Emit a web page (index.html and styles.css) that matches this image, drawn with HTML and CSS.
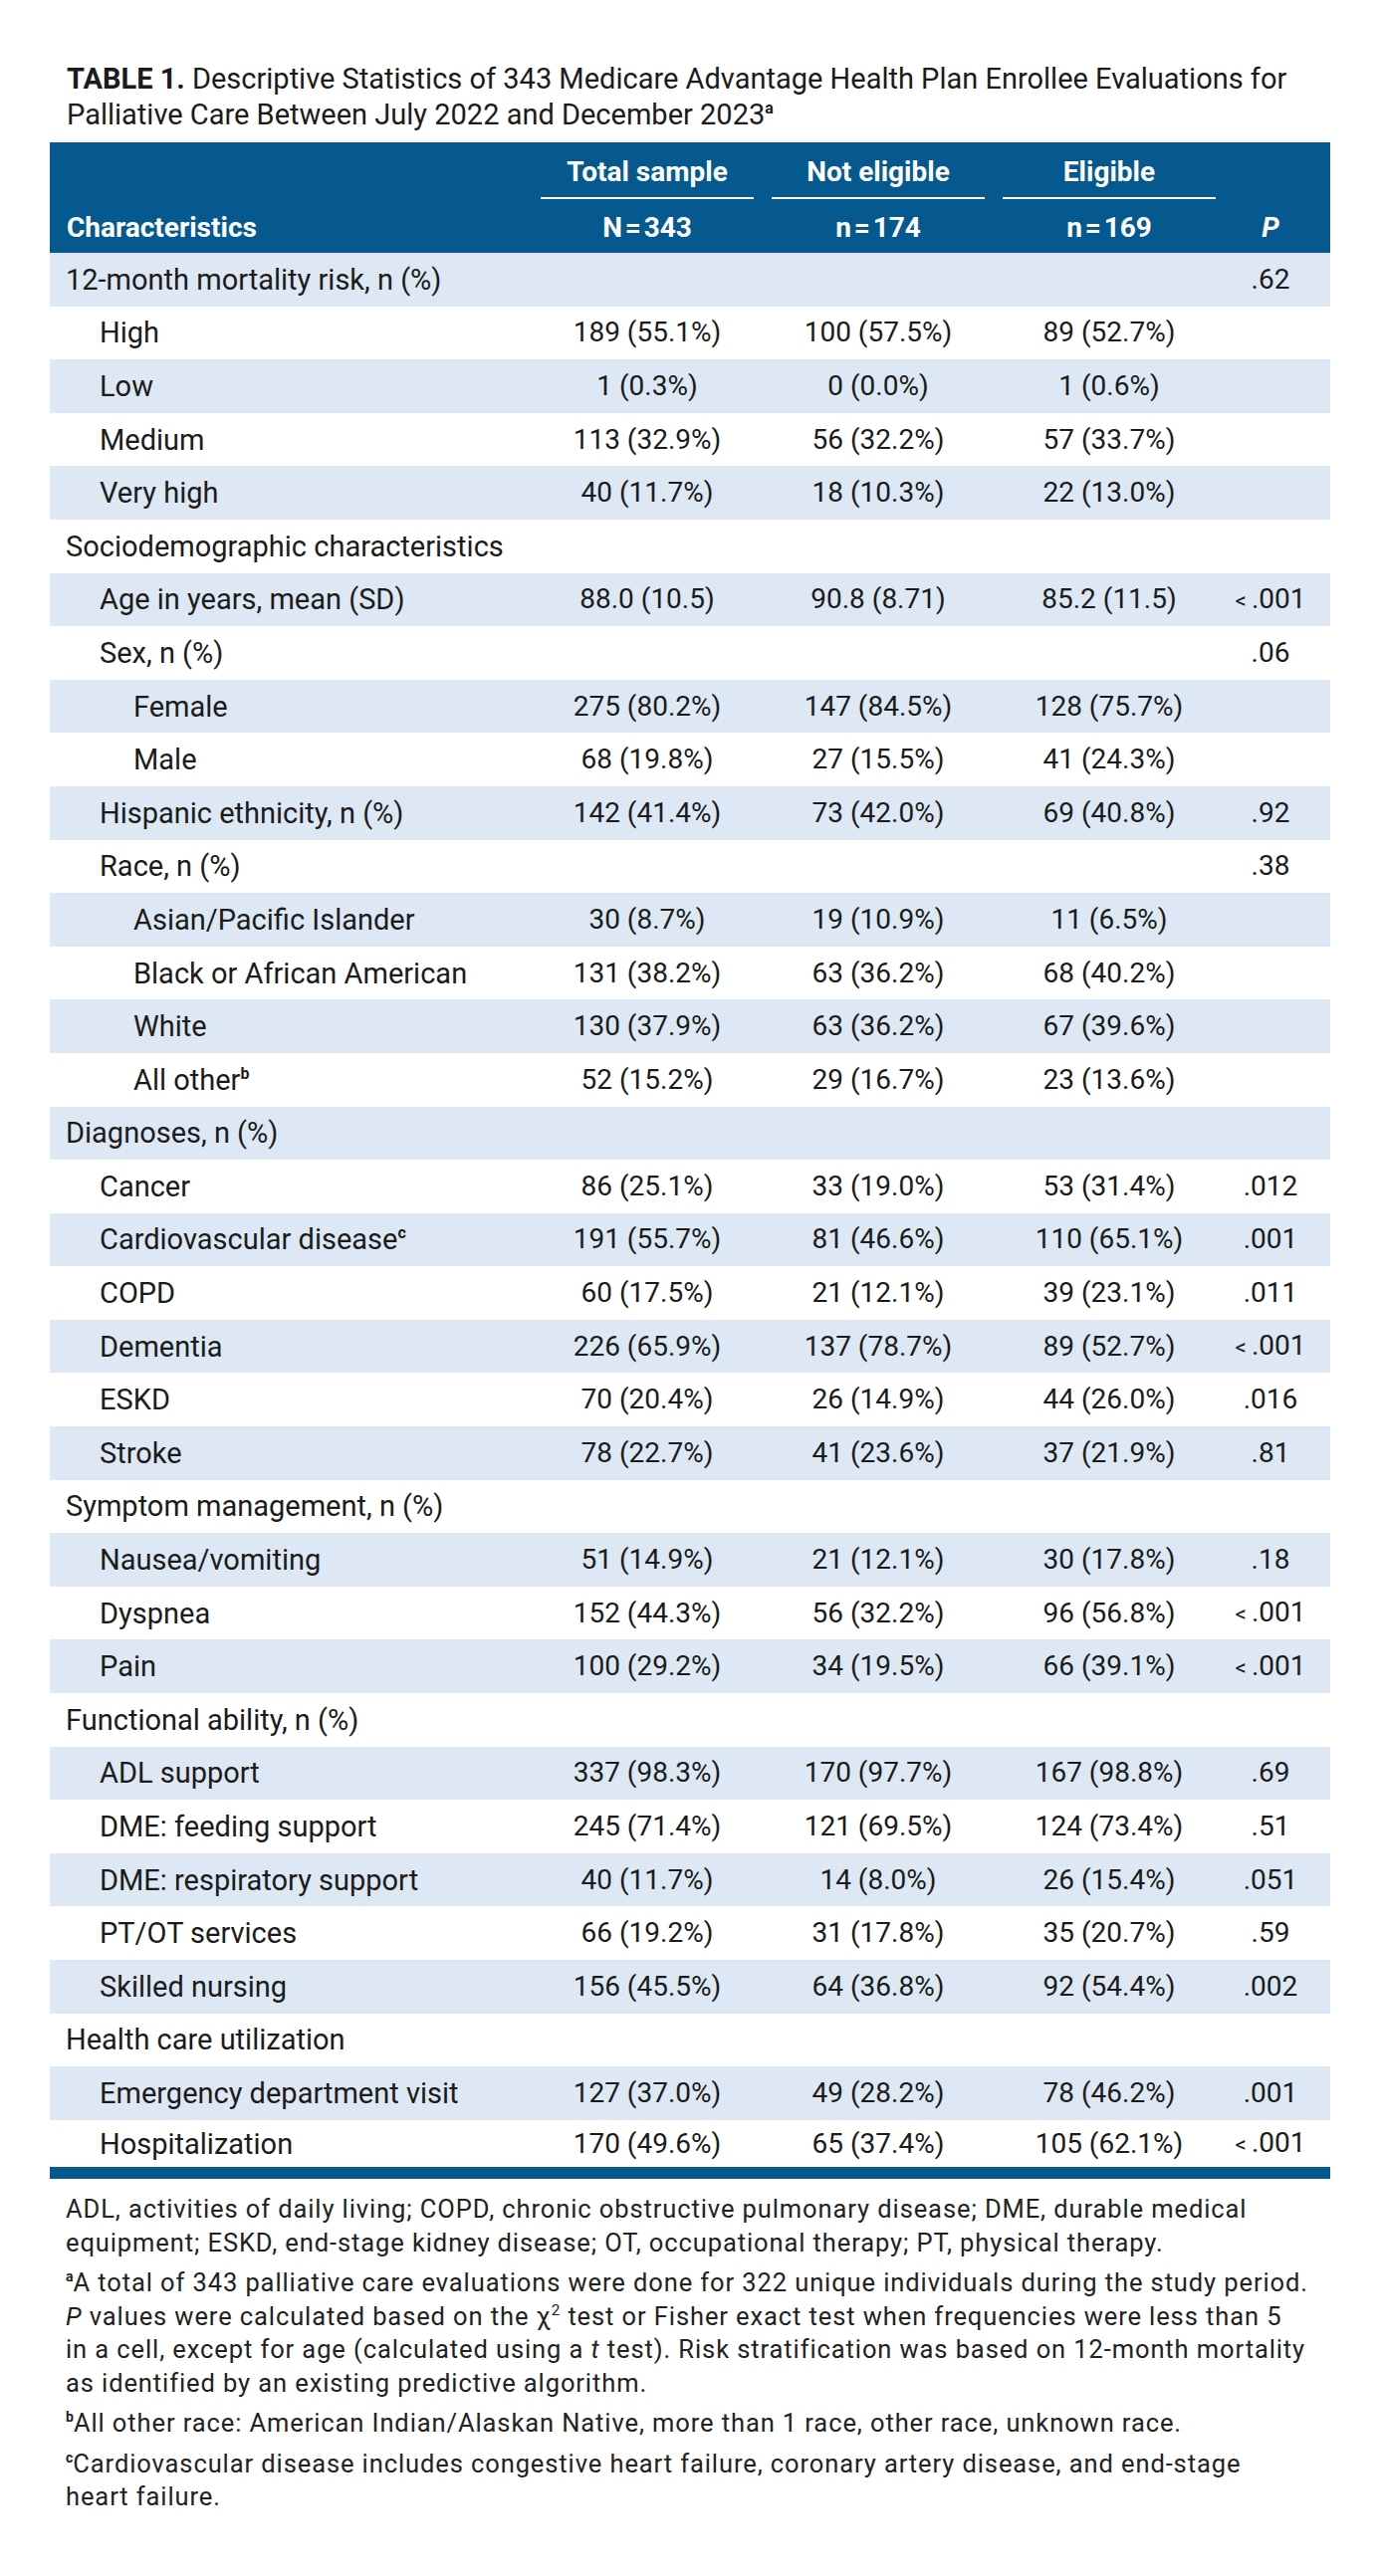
FILE: index.html
```html
<!DOCTYPE html>
<html lang="en">
<head>
<meta charset="utf-8">
<title>Table 1</title>
<link rel="stylesheet" href="styles.css">
</head>
<body>
<div class="figure">
  <p class="caption"><span class="label">TABLE 1.</span> Descriptive Statistics of 343 Medicare Advantage Health Plan Enrollee Evaluations for<br>Palliative Care Between July 2022 and December 2023<sup class="fn">a</sup></p>
  <table class="stats">
    <colgroup>
      <col class="c-char"><col class="c-num"><col class="c-num"><col class="c-num"><col class="c-p">
    </colgroup>
    <thead>
      <tr class="h1">
        <th class="th-char" rowspan="2">Characteristics</th>
        <th class="grp"><div class="grp-label">Total sample</div></th>
        <th class="grp"><div class="grp-label">Not eligible</div></th>
        <th class="grp"><div class="grp-label">Eligible</div></th>
        <th class="th-p" rowspan="2"><i>P</i></th>
      </tr>
      <tr class="h2">
        <th class="nn">N&#8202;=&#8202;343</th>
        <th class="nn">n&#8202;=&#8202;174</th>
        <th class="nn">n&#8202;=&#8202;169</th>
      </tr>
    </thead>
    <tbody>
      <tr><td class="l0">12-month mortality risk, n (%)</td><td></td><td></td><td></td><td class="p">.62</td></tr>
      <tr><td class="l1">High</td><td>189 (55.1%)</td><td>100 (57.5%)</td><td>89 (52.7%)</td><td class="p"></td></tr>
      <tr><td class="l1">Low</td><td>1 (0.3%)</td><td>0 (0.0%)</td><td>1 (0.6%)</td><td class="p"></td></tr>
      <tr><td class="l1">Medium</td><td>113 (32.9%)</td><td>56 (32.2%)</td><td>57 (33.7%)</td><td class="p"></td></tr>
      <tr><td class="l1">Very high</td><td>40 (11.7%)</td><td>18 (10.3%)</td><td>22 (13.0%)</td><td class="p"></td></tr>
      <tr><td class="l0">Sociodemographic characteristics</td><td></td><td></td><td></td><td class="p"></td></tr>
      <tr><td class="l1">Age in years, mean (SD)</td><td>88.0 (10.5)</td><td>90.8 (8.71)</td><td>85.2 (11.5)</td><td class="p"><span class="lt">&lt;</span>.001</td></tr>
      <tr><td class="l1">Sex, n (%)</td><td></td><td></td><td></td><td class="p">.06</td></tr>
      <tr><td class="l2">Female</td><td>275 (80.2%)</td><td>147 (84.5%)</td><td>128 (75.7%)</td><td class="p"></td></tr>
      <tr><td class="l2">Male</td><td>68 (19.8%)</td><td>27 (15.5%)</td><td>41 (24.3%)</td><td class="p"></td></tr>
      <tr><td class="l1">Hispanic ethnicity, n (%)</td><td>142 (41.4%)</td><td>73 (42.0%)</td><td>69 (40.8%)</td><td class="p">.92</td></tr>
      <tr><td class="l1">Race, n (%)</td><td></td><td></td><td></td><td class="p">.38</td></tr>
      <tr><td class="l2">Asian/Pacific Islander</td><td>30 (8.7%)</td><td>19 (10.9%)</td><td>11 (6.5%)</td><td class="p"></td></tr>
      <tr><td class="l2">Black or African American</td><td>131 (38.2%)</td><td>63 (36.2%)</td><td>68 (40.2%)</td><td class="p"></td></tr>
      <tr><td class="l2">White</td><td>130 (37.9%)</td><td>63 (36.2%)</td><td>67 (39.6%)</td><td class="p"></td></tr>
      <tr><td class="l2">All other<sup class="fn">b</sup></td><td>52 (15.2%)</td><td>29 (16.7%)</td><td>23 (13.6%)</td><td class="p"></td></tr>
      <tr><td class="l0">Diagnoses, n (%)</td><td></td><td></td><td></td><td class="p"></td></tr>
      <tr><td class="l1">Cancer</td><td>86 (25.1%)</td><td>33 (19.0%)</td><td>53 (31.4%)</td><td class="p">.012</td></tr>
      <tr><td class="l1">Cardiovascular disease<sup class="fn">c</sup></td><td>191 (55.7%)</td><td>81 (46.6%)</td><td>110 (65.1%)</td><td class="p">.001</td></tr>
      <tr><td class="l1">COPD</td><td>60 (17.5%)</td><td>21 (12.1%)</td><td>39 (23.1%)</td><td class="p">.011</td></tr>
      <tr><td class="l1">Dementia</td><td>226 (65.9%)</td><td>137 (78.7%)</td><td>89 (52.7%)</td><td class="p"><span class="lt">&lt;</span>.001</td></tr>
      <tr><td class="l1">ESKD</td><td>70 (20.4%)</td><td>26 (14.9%)</td><td>44 (26.0%)</td><td class="p">.016</td></tr>
      <tr><td class="l1">Stroke</td><td>78 (22.7%)</td><td>41 (23.6%)</td><td>37 (21.9%)</td><td class="p">.81</td></tr>
      <tr><td class="l0">Symptom management, n (%)</td><td></td><td></td><td></td><td class="p"></td></tr>
      <tr><td class="l1">Nausea/vomiting</td><td>51 (14.9%)</td><td>21 (12.1%)</td><td>30 (17.8%)</td><td class="p">.18</td></tr>
      <tr><td class="l1">Dyspnea</td><td>152 (44.3%)</td><td>56 (32.2%)</td><td>96 (56.8%)</td><td class="p"><span class="lt">&lt;</span>.001</td></tr>
      <tr><td class="l1">Pain</td><td>100 (29.2%)</td><td>34 (19.5%)</td><td>66 (39.1%)</td><td class="p"><span class="lt">&lt;</span>.001</td></tr>
      <tr><td class="l0">Functional ability, n (%)</td><td></td><td></td><td></td><td class="p"></td></tr>
      <tr><td class="l1">ADL support</td><td>337 (98.3%)</td><td>170 (97.7%)</td><td>167 (98.8%)</td><td class="p">.69</td></tr>
      <tr><td class="l1">DME: feeding support</td><td>245 (71.4%)</td><td>121 (69.5%)</td><td>124 (73.4%)</td><td class="p">.51</td></tr>
      <tr><td class="l1">DME: respiratory support</td><td>40 (11.7%)</td><td>14 (8.0%)</td><td>26 (15.4%)</td><td class="p">.051</td></tr>
      <tr><td class="l1">PT/OT services</td><td>66 (19.2%)</td><td>31 (17.8%)</td><td>35 (20.7%)</td><td class="p">.59</td></tr>
      <tr><td class="l1">Skilled nursing</td><td>156 (45.5%)</td><td>64 (36.8%)</td><td>92 (54.4%)</td><td class="p">.002</td></tr>
      <tr><td class="l0">Health care utilization</td><td></td><td></td><td></td><td class="p"></td></tr>
      <tr><td class="l1">Emergency department visit</td><td>127 (37.0%)</td><td>49 (28.2%)</td><td>78 (46.2%)</td><td class="p">.001</td></tr>
      <tr><td class="l1">Hospitalization</td><td>170 (49.6%)</td><td>65 (37.4%)</td><td>105 (62.1%)</td><td class="p"><span class="lt">&lt;</span>.001</td></tr>
    </tbody>
  </table>
  <div class="notes">
    <p>ADL, activities of daily living; COPD, chronic obstructive pulmonary disease; DME, durable medical equipment; ESKD, end-stage kidney disease; OT, occupational therapy; PT, physical therapy.</p>
    <p><sup class="fn">a</sup>A total of 343 palliative care evaluations were done for 322 unique individuals during the study period. <i>P</i> values were calculated based on the &chi;<sup class="sq">2</sup> test or Fisher exact test when frequencies were less than 5 in a cell, except for age (calculated using a <i>t</i> test). Risk stratification was based on 12-month mortality as identified by an existing predictive algorithm.</p>
    <p><sup class="fn">b</sup>All other race: American Indian/Alaskan Native, more than 1 race, other race, unknown race.</p>
    <p><sup class="fn">c</sup>Cardiovascular disease includes congestive heart failure, coronary artery disease, and end-stage heart failure.</p>
  </div>
</div>
</body>
</html>
```
FILE: styles.css
```css
html, body {
  margin: 0;
  padding: 0;
  background: #ffffff;
}

body {
  font-family: Roboto, "Liberation Sans", sans-serif;
  color: #1b1b1b;
}

.figure {
  padding: 61px 50px 40px 50px;
}

.caption {
  margin: 0 0 10px 17px;
  font-size: 29px;
  line-height: 36px;
  font-weight: 400;
}

.caption .label {
  font-weight: 700;
}

sup.fn {
  font-size: 0.55em;
  font-weight: 700;
  line-height: 0;
  vertical-align: 0.7em;
  letter-spacing: 0;
}

sup.sq {
  font-size: 0.6em;
  line-height: 0;
  vertical-align: 0.65em;
}

.stats {
  width: 1286px;
  border-collapse: collapse;
  table-layout: fixed;
  border-bottom: 12px solid #06598e;
}

.c-char { width: 484px; }
.c-num { width: 232px; }
.c-p { width: 106px; }

.stats thead th {
  background: #06598e;
  color: #ffffff;
  font-weight: 700;
  font-size: 28px;
  line-height: 30px;
  padding: 0;
  text-align: center;
}

.stats .h1 { height: 57px; }
.stats .h2 { height: 54px; }

.stats th.th-char {
  text-align: left;
  vertical-align: bottom;
  padding: 0 0 10px 17px;
}

.stats th.th-p {
  vertical-align: bottom;
  padding: 0 14px 10px 0;
}

.stats th.grp {
  vertical-align: bottom;
  padding: 0 9px;
}

.grp-label {
  padding-bottom: 10px;
  border-bottom: 2px solid #ffffff;
}

.stats th.nn {
  vertical-align: bottom;
  padding-bottom: 10px;
}

.stats tbody tr {
  height: 53.6px;
}

.stats tbody tr:nth-child(odd) {
  background: #dde8f4;
}

.stats td {
  font-size: 28px;
  line-height: 32px;
  padding: 0;
  text-align: center;
  vertical-align: middle;
  white-space: nowrap;
}

.stats td.l0,
.stats td.l1,
.stats td.l2 {
  font-size: 29px;
  text-align: left;
}

.stats td.l0 { padding-left: 16px; }
.stats td.l1 { padding-left: 50px; }
.stats td.l2 { padding-left: 84px; }

.stats td.p {
  padding-right: 14px;
}

.lt {
  font-size: 0.8em;
  margin-right: 5px;
}

.notes {
  padding: 14px 22px 0 16px;
  font-size: 25.5px;
  line-height: 33.5px;
  letter-spacing: 0.9px;
  color: #222222;
}

.notes p {
  margin: 0 0 7px 0;
}
```
